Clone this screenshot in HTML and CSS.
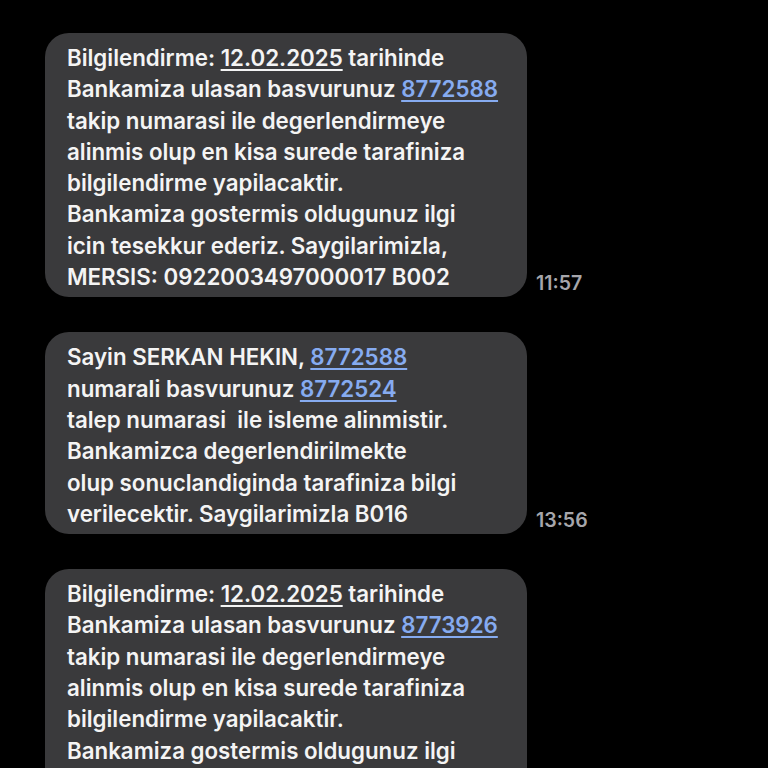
FILE: index.html
```html
<!DOCTYPE html>
<html>
<head>
<meta charset="utf-8">
<link rel="stylesheet" href="styles.css">
</head>
<body>
<div class="thread">
  <div class="row">
    <div class="bubble">Bilgilendirme: <span class="date">12.02.2025</span> tarihinde<br>Bankamiza ulasan basvurunuz <span class="link">8772588</span><br>takip numarasi ile degerlendirmeye<br>alinmis olup en kisa surede tarafiniza<br>bilgilendirme yapilacaktir.<br>Bankamiza gostermis oldugunuz ilgi<br>icin tesekkur ederiz. Saygilarimizla,<br>MERSIS: 0922003497000017 B002</div>
    <div class="time">11:57</div>
  </div>
  <div class="row">
    <div class="bubble">Sayin SERKAN HEKIN, <span class="link">8772588</span><br>numarali basvurunuz <span class="link">8772524</span><br>talep numarasi&nbsp; ile isleme alinmistir.<br>Bankamizca degerlendirilmekte<br>olup sonuclandiginda tarafiniza bilgi<br>verilecektir. Saygilarimizla B016</div>
    <div class="time">13:56</div>
  </div>
  <div class="row">
    <div class="bubble">Bilgilendirme: <span class="date">12.02.2025</span> tarihinde<br>Bankamiza ulasan basvurunuz <span class="link">8773926</span><br>takip numarasi ile degerlendirmeye<br>alinmis olup en kisa surede tarafiniza<br>bilgilendirme yapilacaktir.<br>Bankamiza gostermis oldugunuz ilgi<br>icin tesekkur ederiz. Saygilarimizla,<br>MERSIS: 0922003497000017 B002</div>
  </div>
</div>
</body>
</html>
```
FILE: styles.css
```css
html, body {
  margin: 0;
  padding: 0;
  background: #000;
  height: 768px;
  overflow: hidden;
}
.thread {
  display: flex;
  flex-direction: column;
  gap: 35px;
  padding: 33px 0 0 45px;
  font-family: Inter, "Noto Sans", sans-serif;
}
.row {
  display: flex;
  align-items: flex-end;
}
.bubble {
  box-sizing: border-box;
  width: 482px;
  flex: none;
  background: #3a3a3c;
  border-radius: 24px;
  padding: 9px 10px 5px 22px;
  color: #f4f4f4;
  font-size: 22.3px;
  font-weight: 600;
  line-height: 31.3px;
  white-space: nowrap;
}
.date {
  text-decoration: underline;
  text-decoration-thickness: 2px;
  text-underline-offset: 3px;
}
.link {
  color: #86abf0;
  text-decoration: underline;
  text-decoration-thickness: 2px;
  text-underline-offset: 3px;
}
.time {
  margin-left: 9px;
  margin-bottom: 1px;
  color: #a6a6ab;
  font-size: 19.5px;
  font-weight: 600;
  line-height: 26px;
}
```
